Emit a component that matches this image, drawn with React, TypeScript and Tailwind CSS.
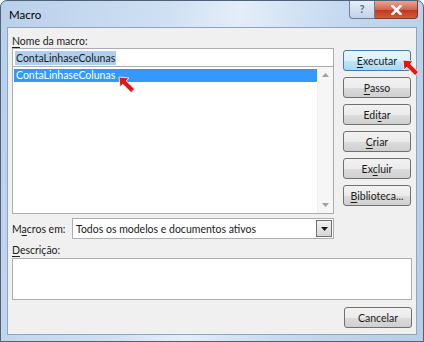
const font = { fontFamily: 'Lato, "Open Sans", sans-serif' };

function RedArrow({ className }: { className: string }) {
  return (
    <svg className={className} width="18" height="18" viewBox="0 0 18 18">
      <path d="M1 1 L11 2 L8.2 4.8 L16.5 13.1 L13.1 16.5 L4.8 8.2 L2 11 Z" fill="#e3160f" stroke="#ffffff" strokeWidth="0.8" strokeLinejoin="round" />
    </svg>
  );
}

function Btn({ u, pre, post, primary }: { u: string; pre: string; post: string; primary?: boolean }) {
  return (
    <div
      className={
        "h-[21px] w-[68px] rounded-[3px] border flex items-center justify-center text-[10.5px] text-[#1a1a1a] " +
        (primary
          ? "border-[#3c7fb1] bg-[linear-gradient(#eaf6fd_0%,#d9f0fc_50%,#bee6fd_51%,#a7d9f5_100%)]"
          : "border-[#707070] bg-[linear-gradient(#f2f2f2_0%,#ebebeb_50%,#dddddd_51%,#cfcfcf_100%)]")
      }
    >
      <span>
        {pre}
        <span className="underline underline-offset-2">{u}</span>
        {post}
      </span>
    </div>
  );
}

export default function App() {
  return (
    <div className="w-[424px] h-[342px] bg-white" style={font}>
      <div className="relative w-[424px] h-[342px] rounded-t-[7px] border border-[#4f6178] bg-[linear-gradient(100deg,#b9d0ea_0%,#cfe0f3_35%,#e4eef9_50%,#c6daf0_70%,#b5cde8_100%)] flex flex-col">
        {/* title bar */}
        <div className="h-[26px] flex items-start shrink-0">
          <div className="pl-[8px] pt-[6px] text-[11.5px] text-black leading-[15px]">Macro</div>
          <div className="ml-auto mr-[5px] flex">
            <div className="w-[26px] h-[18px] rounded-bl-[4px] border border-t-0 border-[#6d7f96] bg-[linear-gradient(#e6eef8,#c3d3e6)] flex items-center justify-center text-[11px] font-bold text-[#5b6e88]">
              ?
            </div>
            <div className="w-[43px] h-[18px] rounded-br-[4px] border border-t-0 border-l-0 border-[#7a3a30] bg-[linear-gradient(#e8a593_0%,#d2664d_50%,#c1391c_55%,#d55a3c_100%)] flex items-center justify-center">
              <svg width="11" height="10" viewBox="0 0 11 10">
                <path d="M1.5 1 L9.5 9 M9.5 1 L1.5 9" stroke="#ffffff" strokeWidth="2.6" strokeLinecap="square" />
              </svg>
            </div>
          </div>
        </div>

        {/* client area */}
        <div className="mx-[6px] mb-[6px] flex-1 border border-[#8ea5c1] bg-[#f0f0f0] flex flex-col px-[4px] text-[10.5px] text-[#1a1a1a] leading-[14px]">
          <div className="flex gap-[9px]">
            <div className="w-[322px] flex flex-col">
              <div className="pt-[6px] h-[20px]">
                <span className="underline underline-offset-2">N</span>ome da macro:
              </div>
              <div className="h-[19px] border border-[#abadb3] bg-white flex items-center pl-[2px]">
                <span className="bg-[#aecff0] px-[1px] leading-[14px]">ContaLinhaseColunas</span>
              </div>
              <div className="relative h-[147px] border border-t-0 border-[#abadb3] bg-white flex">
                <div className="flex-1 pt-[2px] pl-[1px]">
                  <div className="h-[13px] bg-[#3399ff] text-white pl-[2px] leading-[13px]">ContaLinhaseColunas</div>
                </div>
                <div className="w-[16px] bg-[#f6f6f6] border-l border-[#f0f0f0] flex flex-col justify-between items-center py-[6px]">
                  <svg width="7" height="4" viewBox="0 0 7 4"><path d="M0 4 L3.5 0 L7 4 Z" fill="#a0a0a0" /></svg>
                  <svg width="7" height="4" viewBox="0 0 7 4"><path d="M0 0 L3.5 4 L7 0 Z" fill="#a0a0a0" /></svg>
                </div>
                <RedArrow className="absolute left-[105px] top-[9px]" />
              </div>
            </div>
            <div className="relative flex flex-col gap-[6px] pt-[22px]">
              <Btn primary pre="" u="E" post="xecutar" />
              <Btn pre="" u="P" post="asso" />
              <Btn pre="Edi" u="t" post="ar" />
              <Btn pre="" u="C" post="riar" />
              <Btn pre="Ex" u="c" post="luir" />
              <Btn pre="" u="B" post="iblioteca..." />
              <RedArrow className="absolute left-[59px] top-[31px]" />
            </div>
          </div>

          <div className="flex items-center mt-[4px] h-[21px]">
            <div className="w-[60px]">
              M<span className="underline underline-offset-2">a</span>cros em:
            </div>
            <div className="w-[262px] h-[21px] border border-[#abadb3] bg-white flex items-center">
              <div className="flex-1 pl-[3px]">Todos os modelos e documentos ativos</div>
              <div className="w-[16px] h-[17px] mr-[1px] border border-[#707070] bg-[linear-gradient(#f2f2f2,#d6d6d6)] flex items-center justify-center">
                <svg width="7" height="4" viewBox="0 0 7 4"><path d="M0 0 L3.5 4 L7 0 Z" fill="#1a1a1a" /></svg>
              </div>
            </div>
          </div>

          <div className="pt-[4px] h-[19px]">
            <span className="underline underline-offset-2">D</span>escrição:
          </div>
          <div className="h-[42px] border border-[#abadb3] bg-white" />

          <div className="flex justify-end mt-[7px]">
            <Btn pre="Cancelar" u="" post="" />
          </div>
        </div>
      </div>
    </div>
  );
}
